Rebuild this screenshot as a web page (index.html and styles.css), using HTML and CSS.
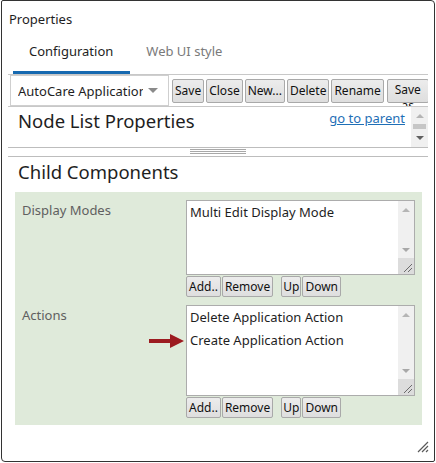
FILE: index.html
```html
<!DOCTYPE html>
<html>
<head>
<meta charset="utf-8">
<title>Properties</title>
<link rel="stylesheet" href="styles.css">
</head>
<body>
<div class="window">
  <div class="title">Properties</div>
  <div class="tabs">
    <div class="tab active">Configuration</div>
    <div class="tab">Web UI style</div>
  </div>
  <div class="toolbar">
    <div class="select"><span class="select-text">AutoCare Application</span><span class="caret"></span></div>
    <button class="btn">Save</button>
    <button class="btn">Close</button>
    <button class="btn">New...</button>
    <button class="btn">Delete</button>
    <button class="btn">Rename</button>
    <button class="btn saveas"><span>Save</span><span>as</span></button>
  </div>
  <div class="nodepane">
    <div class="nodecontent">
      <h2 class="heading">Node List Properties</h2>
      <a class="link" href="#">go to parent</a>
    </div>
    <div class="vscroll">
      <div class="arrow-box"><span class="tri-up light"></span></div>
      <div class="thumb"></div>
      <div class="arrow-box"><span class="tri-down dark"></span></div>
    </div>
  </div>
  <div class="splitter"><div class="grip"></div></div>
  <div class="child">
    <h2 class="heading child-heading">Child Components</h2>
    <div class="panel">
      <div class="row">
        <div class="label">Display Modes</div>
        <div class="field">
          <div class="listbox lb1">
            <div class="items">
              <div class="item">Multi Edit Display Mode</div>
            </div>
            <div class="lscroll">
              <div class="arrow-box"><span class="tri-up light"></span></div>
              <div class="track"></div>
              <div class="arrow-box"><span class="tri-down light"></span></div>
              <div class="corner"><svg width="16" height="16" viewBox="0 0 16 16"><path d="M14 6 L6 14 M14 10 L10 14" stroke="#6b6b6b" stroke-width="1" fill="none"/></svg></div>
            </div>
          </div>
          <div class="btnrow">
            <button class="btn sm">Add..</button>
            <button class="btn sm">Remove</button>
            <button class="btn sm up">Up</button>
            <button class="btn sm">Down</button>
          </div>
        </div>
      </div>
      <div class="row">
        <div class="label">Actions</div>
        <svg class="pointer" width="35" height="14" viewBox="0 0 35 14"><rect x="0" y="5" width="23" height="4" fill="#9c1b20"/><polygon points="21,0 35,7 21,14" fill="#9c1b20"/></svg>
        <div class="field">
          <div class="listbox lb2">
            <div class="items">
              <div class="item">Delete Application Action</div>
              <div class="item">Create Application Action</div>
            </div>
            <div class="lscroll">
              <div class="arrow-box"><span class="tri-up light"></span></div>
              <div class="track"></div>
              <div class="arrow-box"><span class="tri-down light"></span></div>
              <div class="corner"><svg width="16" height="16" viewBox="0 0 16 16"><path d="M14 6 L6 14 M14 10 L10 14" stroke="#6b6b6b" stroke-width="1" fill="none"/></svg></div>
            </div>
          </div>
          <div class="btnrow">
            <button class="btn sm">Add..</button>
            <button class="btn sm">Remove</button>
            <button class="btn sm up">Up</button>
            <button class="btn sm">Down</button>
          </div>
        </div>
      </div>
    </div>
  </div>
  <svg class="wgrip" width="14" height="14" viewBox="0 0 14 14"><path d="M13 3 L3 13 M13 7 L7 13 M13 11 L11 13" stroke="#5a5a5a" stroke-width="1.2" fill="none"/></svg>
</div>
</body>
</html>
```
FILE: styles.css
```css
* { box-sizing: border-box; }
body {
  margin: 0;
  background: #fff;
  font-family: "Noto Sans", "Open Sans", sans-serif;
  color: #1e1e1e;
}
.window {
  position: relative;
  margin-left: 1px;
  width: 434px;
  height: 462px;
  border: 1px solid #333;
  border-radius: 2px 4px 2px 4px;
  background: #fff;
  overflow: hidden;
}
.title {
  font-size: 13px;
  line-height: 18px;
  padding: 9px 0 0 7px;
}
.tabs {
  display: flex;
  margin-left: 11px;
}
.tab {
  font-size: 13px;
  line-height: 18px;
  padding: 14px 17px 11px 16px;
  border-bottom: 3px solid transparent;
  color: #7a7a7a;
}
.tab.active {
  color: #1e1e1e;
  border-bottom-color: #1669b0;
}
.toolbar {
  margin-left: 6px;
  width: 420px;
  height: 33px;
  border-top: 1px solid #c8c8c8;
  border-bottom: 1px solid #c8c8c8;
  display: flex;
  align-items: center;
  gap: 2px;
  overflow: hidden;
}
.toolbar > * {
  flex-shrink: 0;
}
.select {
  margin: 0 1px 0 2px;
  width: 159px;
  height: 31px;
  border: 1px solid #cfcfcf;
  display: flex;
  align-items: center;
  padding-left: 7px;
  font-size: 13px;
}
.select-text {
  width: 125px;
  overflow: hidden;
  white-space: nowrap;
}
.caret {
  margin-left: 5px;
  width: 0;
  height: 0;
  border-left: 5px solid transparent;
  border-right: 5px solid transparent;
  border-top: 5px solid #8a8a8a;
}
.btn {
  height: 24px;
  padding: 0 2px;
  border: 1px solid #a9a9a9;
  border-radius: 2px;
  background: linear-gradient(#ececec, #dedede);
  font-family: "Noto Sans", "Open Sans", sans-serif;
  font-size: 12px;
  color: #111;
  white-space: nowrap;
}
.saveas {
  width: 42px;
  margin-left: 1px;
  display: flex;
  flex-direction: column;
  align-items: center;
  justify-content: flex-start;
  padding-top: 2px;
  line-height: 16px;
  overflow: visible;
}
.nodepane {
  margin-left: 6px;
  width: 420px;
  height: 40px;
  display: flex;
}
.nodecontent {
  flex: 1;
  display: flex;
  justify-content: space-between;
  align-items: flex-start;
}
.heading {
  margin: 0;
  font-size: 18.5px;
  font-weight: normal;
  line-height: 26px;
  color: #1e1e1e;
}
.nodecontent .heading {
  padding: 1px 0 0 10px;
}
.link {
  margin: 2px 6px 0 0;
  font-size: 13px;
  line-height: 18px;
  color: #1f6fb6;
  text-decoration: underline;
}
.vscroll {
  width: 17px;
  background: #f0f0f0;
  display: flex;
  flex-direction: column;
}
.arrow-box {
  height: 17px;
  display: flex;
  align-items: center;
  justify-content: center;
}
.thumb {
  height: 5px;
  margin: 0 2px;
  background: #c6c6c6;
}
.vscroll .arrow-box:last-child {
  flex: 1;
}
.tri-up, .tri-down {
  width: 0;
  height: 0;
  border-left: 4px solid transparent;
  border-right: 4px solid transparent;
}
.tri-up { border-bottom: 4px solid #c2c2c2; }
.tri-down { border-top: 4px solid #a3a3a3; }
.tri-up.light { border-bottom-color: #b5b5b5; }
.tri-down.light { border-top-color: #a8a8a8; }
.tri-down.dark { border-top-color: #606060; }
.splitter {
  margin-left: 6px;
  width: 420px;
  height: 10px;
  border-top: 1px solid #bdbdbd;
  border-bottom: 1px solid #bdbdbd;
  display: flex;
  justify-content: center;
}
.grip {
  margin-top: 1px;
  width: 56px;
  height: 5px;
  background: repeating-linear-gradient(#a8a8a8 0 1px, transparent 1px 2px);
}
.child {
  padding-top: 2px;
}
.child-heading {
  padding-left: 16px;
  margin-bottom: 7px;
}
.panel {
  margin-left: 13px;
  width: 407px;
  padding: 8px 7px 7px;
  background: #dfeada;
  display: flex;
  flex-direction: column;
  gap: 8px;
}
.row {
  position: relative;
  display: grid;
  grid-template-columns: 164px 229px;
}
.label {
  padding-top: 1px;
  font-size: 13px;
  line-height: 18px;
  color: #606060;
}
.pointer {
  position: absolute;
  left: 127px;
  top: 29px;
}
.listbox {
  border: 1px solid #acacac;
  background: #fff;
  display: flex;
}
.lb1 { height: 75px; }
.lb2 { height: 91px; }
.items {
  flex: 1;
  padding: 0 0 0 3px;
  font-size: 13px;
  line-height: 23px;
  color: #1e1e1e;
}
.lscroll {
  width: 16px;
  background: #f0f0f0;
  display: flex;
  flex-direction: column;
}
.track { flex: 1; }
.corner {
  height: 16px;
  background: #dcdcdc;
}
.corner svg { display: block; }
.btnrow {
  margin-top: 1px;
  display: flex;
  gap: 1px;
}
.btn.sm {
  height: 21px;
  padding: 0 2px;
}
.btn.up {
  margin-left: 7px;
  padding: 0 1px;
}
.wgrip {
  position: absolute;
  right: 5px;
  bottom: 8px;
}
```
